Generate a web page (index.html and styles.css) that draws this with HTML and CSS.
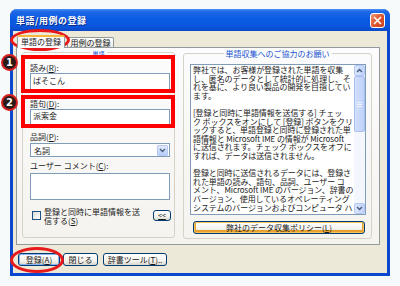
FILE: index.html
```html
<!DOCTYPE html>
<html lang="ja">
<head>
    <meta charset="UTF-8">
    <title>単語/用例の登録</title>
    <link rel="stylesheet" href="styles.css">
</head>
<body>
    <div class="window">
        <div class="titlebar">
            <span class="title">単語/用例の登録</span>
            <span class="close">
                <svg width="9" height="9" viewBox="0 0 9 9"><path d="M1 1L8 8M8 1L1 8" stroke="#fff" stroke-width="1.6"/></svg>
            </span>
        </div>

        <div class="client">
            <!-- タブ -->
            <div class="tabs">
                <div class="tab active">単語の登録</div>
                <div class="tab">用例の登録</div>
            </div>

            <div class="panel">
                <!-- 単語 -->
                <div class="group left">
                    <span class="legend small">単語</span>
                    <div class="lbl l1">読み(<u>R</u>):</div>
                    <div class="input in1">ぱそこん</div>
                    <div class="lbl l2">語句(<u>D</u>):</div>
                    <div class="input in2">派索金</div>
                    <div class="lbl l3">品詞(<u>P</u>):</div>
                    <div class="combo">
                        <span>名詞</span>
                        <span class="drop">
                            <svg width="7" height="5" viewBox="0 0 7 5"><path d="M1 1L3.5 3.5L6 1" fill="none" stroke="#4d6185" stroke-width="1.5"/></svg>
                        </span>
                    </div>
                    <div class="lbl l4">ユーザー コメント(<u>C</u>):</div>
                    <div class="input area"></div>
                    <div class="check-row">
                        <span class="checkbox"></span>
                        <span class="check-text">登録と同時に単語情報を送<br>信する(<u>S</u>)</span>
                        <span class="btn small-btn"><u>&lt;&lt;</u></span>
                    </div>
                </div>

                <!-- 単語収集へのご協力のお願い -->
                <div class="group right">
                    <span class="legend">単語収集へのご協力のお願い</span>
                    <div class="textbox">
                        <div class="text">
                            <div>弊社では、お客様が登録された単語を収集</div>
                            <div>し、匿名のデータとして統計的に処理し、そ</div>
                            <div>れを基に、より良い製品の開発を目指してい</div>
                            <div>ます。</div>
                            <div>&nbsp;</div>
                            <div>[登録と同時に単語情報を送信する] チェッ</div>
                            <div>ク ボックスをオンにして [登録] ボタンをクリ</div>
                            <div>ックすると、単語登録と同時に登録された単</div>
                            <div>語情報と Microsoft IME の情報が Microsoft</div>
                            <div>に送信されます。チェック ボックスをオフに</div>
                            <div>すれば、データは送信されません。</div>
                            <div>&nbsp;</div>
                            <div>登録と同時に送信されるデータには、登録さ</div>
                            <div>れた単語の読み、語句、品詞、ユーザー コ</div>
                            <div>メント、Microsoft IME のバージョン、辞書の</div>
                            <div>バージョン、使用しているオペレーティング</div>
                            <div>システムのバージョンおよびコンピュータ ハ</div>
                        </div>
                        <div class="scrollbar">
                            <span class="arrow">
                                <svg width="7" height="5" viewBox="0 0 7 5"><path d="M1 4L3.5 1.5L6 4" fill="none" stroke="#4d6185" stroke-width="1.5"/></svg>
                            </span>
                            <span class="thumb"><i></i><i></i><i></i></span>
                            <span class="track"></span>
                            <span class="arrow">
                                <svg width="7" height="5" viewBox="0 0 7 5"><path d="M1 1L3.5 3.5L6 1" fill="none" stroke="#4d6185" stroke-width="1.5"/></svg>
                            </span>
                        </div>
                    </div>
                    <div class="btn policy">弊社のデータ収集ポリシー(<u>L</u>)</div>
                </div>
            </div>

            <!-- 下部ボタン -->
            <div class="buttons">
                <span class="btn b-add">登録(<u>A</u>)</span>
                <span class="btn b-close">閉じる</span>
                <span class="btn b-tool">辞書ツール(<u>T</u>)..</span>
            </div>
        </div>
    </div>

    <!-- 注釈 -->
    <div class="ring ring-tab"></div>
    <div class="ring ring-btn"></div>
    <div class="box box-1"></div>
    <div class="box box-2"></div>
    <div class="num num-1">1</div>
    <div class="num num-2">2</div>
</body>
</html>
```

FILE: styles.css
```css
* {
    box-sizing: border-box;
}
body {
    margin: 0;
    padding: 9px 0 0 10px;
    background: #f7fafa;
    font-family: "Noto Sans CJK JP", sans-serif;
    font-size: 8px;
    line-height: 9px;
    color: #1a1a1a;
    position: relative;
    height: 286px;
    overflow: hidden;
}
u {
    text-decoration: underline;
    text-underline-offset: 1px;
}
.window {
    width: 380px;
    height: 267px;
    background: #0a48d0;
    border-radius: 7px 7px 0 0;
    display: flex;
    flex-direction: column;
}
.titlebar {
    height: 22px;
    border-radius: 7px 7px 0 0;
    background: linear-gradient(#4a90f8 0%, #1d68e6 12%, #0b5be4 45%, #0a55dc 80%, #0a49c8 100%);
    display: flex;
    align-items: center;
    justify-content: space-between;
    padding: 0 5px 0 6px;
}
.title {
    color: #fff;
    font-weight: bold;
    font-size: 9px;
    letter-spacing: 0.5px;
    text-shadow: 1px 1px 0 #0a2a8a;
}
.close {
    width: 15px;
    height: 15px;
    border: 1px solid #fff;
    border-radius: 3px;
    background: linear-gradient(135deg, #ec9a7a 0%, #e0592f 45%, #c6401c 100%);
    display: flex;
    align-items: center;
    justify-content: center;
}
.client {
    flex: 1;
    margin: 0 3px 3px 3px;
    background: #ece9d8;
    padding: 4px 7px 0 3px;
}
.tabs {
    height: 12px;
    display: flex;
    align-items: flex-end;
}
.tab {
    height: 10px;
    width: 47px;
    margin-left: 3px;
    border: 1px solid #919b9c;
    border-bottom: none;
    border-radius: 2px 2px 0 0;
    background: linear-gradient(#fefefe, #ecebe6);
    font-size: 8px;
    line-height: 9px;
    text-align: center;
    white-space: nowrap;
}
.tab.active {
    height: 13px;
    width: 48px;
    margin-left: 1px;
    margin-bottom: -1px;
    border-top: 2px solid #f5b83c;
    background: #fcfcfe;
    line-height: 10px;
    position: relative;
    z-index: 1;
}
.tab.active + .tab {
    margin-left: 2px;
}
.panel {
    height: 198px;
    border: 1px solid #919b9c;
    background: linear-gradient(#fcfcfe, #f4f3ee);
    display: flex;
    gap: 8px;
    padding: 4px 0 0 5px;
}
.group {
    position: relative;
    border: 1px solid #d5d3c8;
    border-radius: 3px;
    height: 186px;
}
.legend {
    position: absolute;
    top: -5px;
    left: 0;
    right: 0;
    margin: 0 auto;
    width: max-content;
    padding: 0 2px;
    background: #fbfbfc;
    color: #1a55d0;
    font-size: 8px;
    line-height: 9px;
}
.legend.small {
    font-size: 6px;
    line-height: 7px;
    top: -3px;
}
.left {
    width: 153px;
    padding: 10px 3px 0 7px;
}
.lbl {
    height: 9px;
    white-space: nowrap;
}
.input {
    width: 140px;
    border: 1px solid #7f9db9;
    background: #fff;
    padding: 2px 2px;
    margin-top: 1px;
}
.in1 {
    height: 19px;
}
.in2 {
    height: 16px;
    padding-top: 1px;
}
.l2, .l3 {
    margin-top: 7px;
}
.l4 {
    margin-top: 4px;
}
.combo {
    width: 140px;
    height: 14px;
    margin-top: 2px;
    border: 1px solid #7f9db9;
    background: #fff;
    display: flex;
    align-items: center;
    justify-content: space-between;
    padding: 0 1px 0 3px;
}
.drop {
    width: 11px;
    height: 11px;
    border: 1px solid #b6c9f4;
    border-radius: 1px;
    background: linear-gradient(#e2ebfd, #b9cdf8);
    display: flex;
    align-items: center;
    justify-content: center;
}
.area {
    height: 27px;
    margin-top: 3px;
}
.check-row {
    display: flex;
    align-items: flex-start;
    margin-top: 7px;
    padding-left: 2px;
}
.checkbox {
    width: 9px;
    height: 9px;
    margin-top: 4px;
    border: 1px solid #1c5180;
    background: linear-gradient(135deg, #dcdcd7, #fff);
}
.check-text {
    margin-left: 3px;
    line-height: 9px;
    white-space: nowrap;
}
.btn {
    border: 1px solid #003c74;
    border-radius: 3px;
    background: linear-gradient(#ffffff 0%, #f4f3ee 60%, #dcd8ce 100%);
    display: flex;
    align-items: center;
    justify-content: center;
    white-space: nowrap;
    font-size: 8px;
}
.small-btn {
    width: 18px;
    height: 11px;
    margin-left: auto;
    margin-top: 3px;
    font-size: 7px;
}
.right {
    width: 189px;
    margin-top: 1px;
    padding: 10px 0 0 6px;
}
.textbox {
    width: 176px;
    height: 151px;
    border: 1px solid #7f9db9;
    background: #fff;
    display: flex;
}
.text {
    flex: 1;
    overflow: hidden;
    padding: 1px 0 0 2px;
    line-height: 8.6px;
    white-space: nowrap;
    letter-spacing: -0.1px;
}
.scrollbar {
    width: 11px;
    display: flex;
    flex-direction: column;
    background: #f3f6fd;
}
.arrow {
    height: 11px;
    border: 1px solid #b6c9f4;
    border-radius: 2px;
    background: linear-gradient(90deg, #dbe6fd, #c1d3fb);
    display: flex;
    align-items: center;
    justify-content: center;
}
.thumb {
    height: 56px;
    border: 1px solid #a8bff0;
    border-radius: 2px;
    background: linear-gradient(90deg, #d3e0fd, #bfd1fa);
    display: flex;
    flex-direction: column;
    align-items: center;
    justify-content: center;
    gap: 1px;
}
.thumb i {
    width: 5px;
    height: 1px;
    background: #eef3fe;
}
.track {
    flex: 1;
}
.policy {
    width: 172px;
    height: 13px;
    margin: 6px 0 0 3px;
    box-shadow: inset 0 0 0 1px #f9c55a, inset 0 -1px 0 2px #e8a030;
}
.buttons {
    display: flex;
    margin-top: 8px;
    padding-left: 2px;
}
.buttons .btn {
    height: 13px;
}
.b-add {
    width: 42px;
    box-shadow: inset 0 0 0 1px #8cb4f2;
}
.b-close {
    width: 35px;
    margin-left: 3px;
}
.b-tool {
    width: 64px;
    margin-left: 5px;
}

/* 注釈 */
.ring {
    position: absolute;
    border: 3px solid #e8191b;
    border-radius: 50%;
}
.ring-tab {
    left: 10px;
    top: 29px;
    width: 60px;
    height: 22px;
}
.ring-btn {
    left: 10px;
    top: 247px;
    width: 54px;
    height: 26px;
}
.box {
    position: absolute;
    border: 4px solid #f00;
    left: 21px;
    width: 154px;
}
.box-1 {
    top: 55px;
    height: 38px;
}
.box-2 {
    top: 95px;
    height: 33px;
}
.num {
    position: absolute;
    left: 1px;
    width: 17px;
    height: 17px;
    border-radius: 50%;
    border: 2px solid #d42020;
    background: #2a1a18;
    color: #fff;
    font-family: "DejaVu Sans", sans-serif;
    font-weight: bold;
    font-size: 10px;
    line-height: 13px;
    text-align: center;
}
.num-1 {
    top: 54px;
}
.num-2 {
    top: 94px;
}
```
